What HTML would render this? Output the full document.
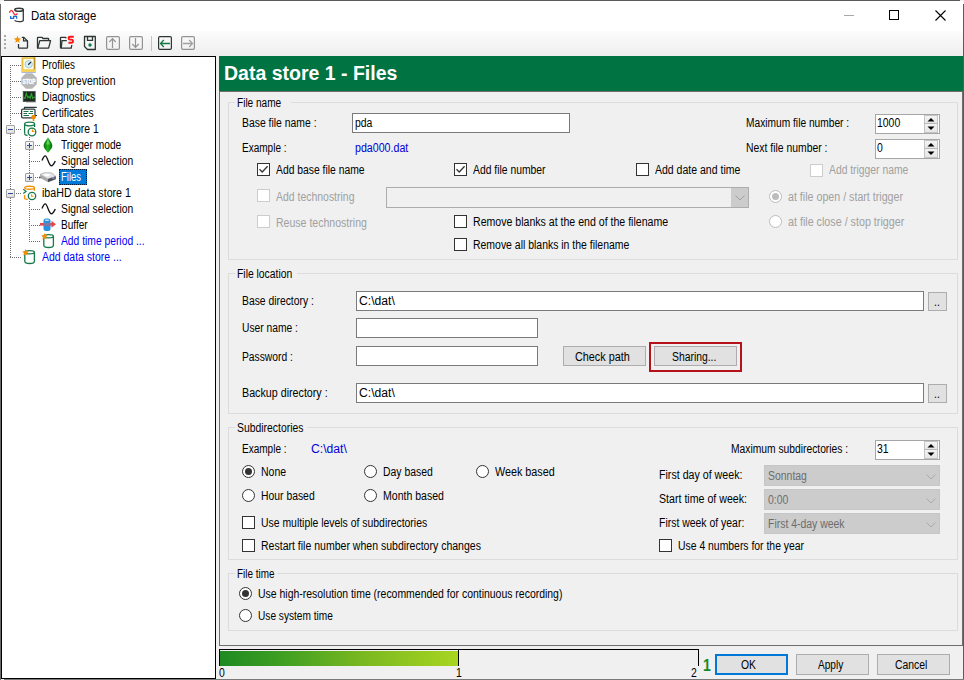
<!DOCTYPE html><html><head><meta charset="utf-8"><style>
*{margin:0;padding:0;box-sizing:border-box}
html,body{width:964px;height:680px;overflow:hidden;background:#f0f0f0;font-family:"Liberation Sans",sans-serif;color:#000}
.a{position:absolute}
.t{position:absolute;font-size:12px;line-height:14px;white-space:nowrap;transform-origin:0 0;transform:scaleX(.87)}
.gb{position:absolute;border:1px solid #dcdcdc}
.tb{position:absolute;background:#fff;border:1px solid #7a7a7a}
.cb{position:absolute;width:13px;height:13px;border:1px solid #333;background:#fff}
.cbd{position:absolute;width:13px;height:13px;border:1px solid #cccccc;background:#fff}
.rb{position:absolute;width:13px;height:13px;border:1px solid #333;border-radius:50%;background:#fff}
.rbd{position:absolute;width:13px;height:13px;border:1px solid #bcbcbc;border-radius:50%;background:#fff}
.btn{position:absolute;background:#e1e1e1;border:1px solid #adadad}
.dis{color:#a0a0a0}
.lnk{color:#1a1ae6}
svg{position:absolute;overflow:visible}
</style></head><body>
<div class="a" style="left:4px;top:0px;width:956px;height:1px;background:#5a5a5a"></div>
<div class="a" style="left:0px;top:4px;width:1px;height:676px;background:#6a6a6a"></div>
<div class="a" style="left:963px;top:4px;width:1px;height:676px;background:#5a5a5a"></div>
<div class="a" style="left:4px;top:679px;width:960px;height:1px;background:#7a7a7a"></div>
<div class="a" style="left:1px;top:1px;width:962px;height:30px;background:#fff"></div>
<div class="t" style="left:31px;top:9px;transform:scaleX(0.95);">Data storage</div>
<div class="a" style="left:844px;top:15px;width:10px;height:1px;background:#a8a8a8"></div>
<div class="a" style="left:889px;top:10px;width:10px;height:10px;border:1px solid #000"></div>
<svg style="left:935px;top:10px" width="11" height="11"><path d="M0.5 0.5L10.5 10.5M10.5 0.5L0.5 10.5" stroke="#000" stroke-width="1.1"/></svg>
<div class="a" style="left:1px;top:31px;width:962px;height:25px;background:linear-gradient(#fcfcfc,#eeeeee)"></div>
<svg style="left:8px;top:7px" width="18" height="17" viewBox="0 0 18 17"><ellipse cx="11" cy="2.8" rx="4.2" ry="1.5" fill="#fff" stroke="#343a3a" stroke-width="1.6"/><path d="M15.3 2.5V13.2Q15.3 14.6 11 14.6Q7.6 14.6 6.6 13.4" fill="none" stroke="#343a3a" stroke-width="1.3"/><path d="M1.3 5.6C2 4.2 2.8 3.3 3.5 3.3C5 3.3 5.8 7.9 7.1 7.9C8 7.9 8.7 7.2 9.5 6.5" fill="none" stroke="#ff2a2a" stroke-width="1.3"/><path d="M2.6 9V11.3H5.6V9.3H8.6V11.8" fill="none" stroke="#1a6fd6" stroke-width="1.3"/></svg>
<div class="a" style="left:4px;top:35px;width:2px;height:2px;background:#a8a8a8"></div>
<div class="a" style="left:4px;top:39px;width:2px;height:2px;background:#a8a8a8"></div>
<div class="a" style="left:4px;top:43px;width:2px;height:2px;background:#a8a8a8"></div>
<div class="a" style="left:4px;top:47px;width:2px;height:2px;background:#a8a8a8"></div>
<svg style="left:13px;top:35px" width="17" height="16" viewBox="0 0 17 16"><path d="M5.5 9V12.5Q5.5 13.2 6.2 13.2H13.8Q14.5 13.2 14.5 12.5V6L10.8 2.3H8.8" fill="none" stroke="#2d3535" stroke-width="1.3"/><path d="M10.5 2.3V5.8H14.5" fill="none" stroke="#2d3535" stroke-width="1.2"/><path d="M4.5 0.8L5.5 3.3L8.2 3.5L6.1 5.2L6.8 7.8L4.5 6.4L2.2 7.8L2.9 5.2L0.8 3.5L3.5 3.3Z" fill="#f39000"/></svg>
<svg style="left:36px;top:36px" width="16" height="14" viewBox="0 0 16 14"><path d="M1.5 12.2V2Q1.5 1.3 2.2 1.3H6L7 2.5H12.2Q12.6 2.5 12.6 3V4.3" fill="none" stroke="#2d3535" stroke-width="1.3"/><path d="M1.7 12.2L3.8 4.6H14.6L12.6 12.2Z" fill="none" stroke="#2d3535" stroke-width="1.3" stroke-linejoin="round"/></svg>
<svg style="left:59px;top:35px" width="17" height="15" viewBox="0 0 17 15"><path d="M1.5 13.2V3Q1.5 2.3 2.2 2.3H6.5L7.3 3.2" fill="none" stroke="#2d3535" stroke-width="1.3"/><path d="M2.2 13.2L3 5.6H7.8" fill="none" stroke="#2d3535" stroke-width="1.3"/><path d="M1.5 13.2H12.2L12.8 10" fill="none" stroke="#2d3535" stroke-width="1.3"/><path d="M14.8 1.8H11.2Q9.6 1.8 9.6 3.3Q9.6 4.6 11.2 4.6H12.4Q14 4.6 14 6.3Q14 7.8 12.4 7.8H9.4" fill="none" stroke="#ff1414" stroke-width="1.9"/></svg>
<svg style="left:83px;top:35px" width="14" height="16" viewBox="0 0 14 16"><path d="M1.5 1.5H12.3V14.5H4.5L1.5 11.5Z" fill="none" stroke="#2d3535" stroke-width="1.3" stroke-linejoin="round"/><path d="M4.5 1.5V5.3H9.5V1.5" fill="none" stroke="#2d3535" stroke-width="1.3"/><circle cx="7" cy="10" r="1.7" fill="#137a48"/></svg>
<svg style="left:105px;top:35px" width="16" height="16" viewBox="0 0 16 16"><rect x="1.6" y="1.6" width="12.8" height="12.8" rx="1.3" fill="none" stroke="#939393" stroke-width="1.2"/><path d="M7.5 13V3.5M4.3 7L7.5 3.6L10.7 7" fill="none" stroke="#939393" stroke-width="1.2"/></svg>
<svg style="left:128px;top:35px" width="16" height="16" viewBox="0 0 16 16"><rect x="1.6" y="1.6" width="12.8" height="12.8" rx="1.3" fill="none" stroke="#939393" stroke-width="1.2"/><path d="M7.5 3V12.5M4.3 9L7.5 12.4L10.7 9" fill="none" stroke="#939393" stroke-width="1.2"/></svg>
<div class="a" style="left:151px;top:36px;width:1px;height:15px;background:#c4c4c4"></div>
<svg style="left:157px;top:35px" width="16" height="16" viewBox="0 0 16 16"><rect x="1.6" y="1.6" width="12.8" height="12.8" rx="1.3" fill="none" stroke="#2d3535" stroke-width="1.2"/><path d="M3.5 8.5H13M6.8 5L3.5 8.5L6.8 12" fill="none" stroke="#137a48" stroke-width="1.3"/></svg>
<svg style="left:180px;top:35px" width="16" height="16" viewBox="0 0 16 16"><rect x="1.6" y="1.6" width="12.8" height="12.8" rx="1.3" fill="none" stroke="#939393" stroke-width="1.2"/><path d="M3 8.5H12.5M9.2 5L12.5 8.5L9.2 12" fill="none" stroke="#a0a0a0" stroke-width="1.3"/></svg>
<div class="a" style="left:1px;top:56px;width:215px;height:623px;border:1px solid #000;background:#fff"></div>
<div class="a" style="left:10px;top:65px;width:1px;height:60px;background:repeating-linear-gradient(to bottom,#6b6b6b 0 1px,transparent 1px 2px)"></div>
<div class="a" style="left:10px;top:134px;width:1px;height:55px;background:repeating-linear-gradient(to bottom,#6b6b6b 0 1px,transparent 1px 2px)"></div>
<div class="a" style="left:10px;top:198px;width:1px;height:60px;background:repeating-linear-gradient(to bottom,#6b6b6b 0 1px,transparent 1px 2px)"></div>
<div class="a" style="left:10px;top:65px;width:11px;height:1px;background:repeating-linear-gradient(to right,#6b6b6b 0 1px,transparent 1px 2px)"></div>
<div class="a" style="left:10px;top:81px;width:11px;height:1px;background:repeating-linear-gradient(to right,#6b6b6b 0 1px,transparent 1px 2px)"></div>
<div class="a" style="left:10px;top:97px;width:11px;height:1px;background:repeating-linear-gradient(to right,#6b6b6b 0 1px,transparent 1px 2px)"></div>
<div class="a" style="left:10px;top:113px;width:11px;height:1px;background:repeating-linear-gradient(to right,#6b6b6b 0 1px,transparent 1px 2px)"></div>
<div class="a" style="left:10px;top:257px;width:11px;height:1px;background:repeating-linear-gradient(to right,#6b6b6b 0 1px,transparent 1px 2px)"></div>
<div class="a" style="left:6px;top:125px;width:9px;height:9px;border:1px solid #a0a0a0;background:linear-gradient(#fafafa,#dcdcdc);border-radius:1px"></div>
<div class="a" style="left:8px;top:129px;width:5px;height:1px;background:#2a4b9b"></div>
<div class="a" style="left:16px;top:129px;width:5px;height:1px;background:repeating-linear-gradient(to right,#6b6b6b 0 1px,transparent 1px 2px)"></div>
<div class="a" style="left:6px;top:189px;width:9px;height:9px;border:1px solid #a0a0a0;background:linear-gradient(#fafafa,#dcdcdc);border-radius:1px"></div>
<div class="a" style="left:8px;top:193px;width:5px;height:1px;background:#2a4b9b"></div>
<div class="a" style="left:16px;top:193px;width:5px;height:1px;background:repeating-linear-gradient(to right,#6b6b6b 0 1px,transparent 1px 2px)"></div>
<div class="a" style="left:29px;top:137px;width:1px;height:4px;background:repeating-linear-gradient(to bottom,#6b6b6b 0 1px,transparent 1px 2px)"></div>
<div class="a" style="left:29px;top:150px;width:1px;height:23px;background:repeating-linear-gradient(to bottom,#6b6b6b 0 1px,transparent 1px 2px)"></div>
<div class="a" style="left:29px;top:201px;width:1px;height:41px;background:repeating-linear-gradient(to bottom,#6b6b6b 0 1px,transparent 1px 2px)"></div>
<div class="a" style="left:25px;top:141px;width:9px;height:9px;border:1px solid #a0a0a0;background:linear-gradient(#fafafa,#dcdcdc);border-radius:1px"></div>
<div class="a" style="left:27px;top:145px;width:5px;height:1px;background:#2a4b9b"></div>
<div class="a" style="left:29px;top:143px;width:1px;height:5px;background:#2a4b9b"></div>
<div class="a" style="left:35px;top:145px;width:5px;height:1px;background:repeating-linear-gradient(to right,#6b6b6b 0 1px,transparent 1px 2px)"></div>
<div class="a" style="left:29px;top:161px;width:11px;height:1px;background:repeating-linear-gradient(to right,#6b6b6b 0 1px,transparent 1px 2px)"></div>
<div class="a" style="left:25px;top:173px;width:9px;height:9px;border:1px solid #a0a0a0;background:linear-gradient(#fafafa,#dcdcdc);border-radius:1px"></div>
<div class="a" style="left:27px;top:177px;width:5px;height:1px;background:#2a4b9b"></div>
<div class="a" style="left:29px;top:175px;width:1px;height:5px;background:#2a4b9b"></div>
<div class="a" style="left:35px;top:177px;width:5px;height:1px;background:repeating-linear-gradient(to right,#6b6b6b 0 1px,transparent 1px 2px)"></div>
<div class="a" style="left:29px;top:209px;width:11px;height:1px;background:repeating-linear-gradient(to right,#6b6b6b 0 1px,transparent 1px 2px)"></div>
<div class="a" style="left:29px;top:225px;width:11px;height:1px;background:repeating-linear-gradient(to right,#6b6b6b 0 1px,transparent 1px 2px)"></div>
<div class="a" style="left:29px;top:241px;width:11px;height:1px;background:repeating-linear-gradient(to right,#6b6b6b 0 1px,transparent 1px 2px)"></div>
<svg style="left:21px;top:57px" width="16" height="16" viewBox="0 0 16 16"><rect x="0.5" y="0.3" width="13.8" height="14.7" fill="#e6bd3a"/><rect x="12.6" y="0.3" width="1.7" height="12.5" fill="#b88f1e"/><rect x="2.4" y="1.9" width="10.2" height="10.6" fill="#fffbe2"/><rect x="0.5" y="12.5" width="14.3" height="2.5" fill="#f2d25a"/><rect x="0.5" y="15" width="14.3" height="0.8" fill="#9aa6c8"/><circle cx="7.7" cy="7.2" r="3.7" fill="#d2f0fb" stroke="#98b4c8" stroke-width="0.7"/><path d="M7.2 7.8L9.9 5.1" stroke="#1e2a38" stroke-width="1.3"/></svg>
<svg style="left:21px;top:73px" width="16" height="16" viewBox="0 0 16 16"><path d="M4.8 0.3H11.2L15.8 4.8V11.2L11.2 15.8H4.8L0.3 11.2V4.8Z" fill="#b7b7b7"/><text x="8" y="10.6" font-size="6.3" font-weight="bold" fill="#fff" stroke="#fff" stroke-width="0.35" text-anchor="middle" font-family="Liberation Sans" textLength="13" lengthAdjust="spacingAndGlyphs">STOP</text></svg>
<svg style="left:22px;top:90px" width="15" height="14" viewBox="0 0 15 14"><rect x="1.2" y="1.4" width="12" height="10.2" fill="#1e2820" stroke="#505850" stroke-width="0.8"/><path d="M1.6 7.4L3 8.5L4.3 3.3L5.8 7.6L7 6.4L8.1 8.2L9.5 3.2L10.5 8.4L11.6 7.3H12.8" fill="none" stroke="#27a52c" stroke-width="1.2"/><rect x="4" y="12" width="10" height="1" fill="#cfcfcf"/></svg>
<svg style="left:21px;top:106px" width="17" height="16" viewBox="0 0 17 16"><path d="M3.5 3V1.3H15.8" fill="none" stroke="#2d3a3a" stroke-width="1.2"/><path d="M14 9.5H16" stroke="#2d3a3a" stroke-width="1.2"/><rect x="0.6" y="3.2" width="13.4" height="8.6" rx="1" fill="#fff" stroke="#2d3a3a" stroke-width="1.2"/><path d="M2.5 5.5H7.5M9 5.5H12M2.5 7.5H6M7.5 7.5H12M2.5 9.5H8" stroke="#137a48" stroke-width="1.1"/><circle cx="12.5" cy="11" r="2.2" fill="#f08c00"/><path d="M12.5 12.5V15" stroke="#f08c00" stroke-width="1.6"/></svg>
<svg style="left:22px;top:121px" width="16" height="16" viewBox="0 0 16 16"><path d="M2.6 12.5V3.2M12.6 3.2V6" fill="none" stroke="#137a48" stroke-width="1.3"/><ellipse cx="7.6" cy="3" rx="5" ry="1.8" fill="none" stroke="#137a48" stroke-width="1.3"/><path d="M2.6 12.5Q2.6 14.2 5.5 14.5" fill="none" stroke="#137a48" stroke-width="1.3"/><circle cx="10" cy="11" r="3.8" fill="#fff" stroke="#137a48" stroke-width="1.3"/><path d="M10.5 8.5V10.5H12.5" fill="none" stroke="#f39200" stroke-width="1.2"/></svg>
<svg style="left:43px;top:137px" width="10" height="16" viewBox="0 0 10 16"><defs><linearGradient id="gg" x1="0" x2="1"><stop offset="0" stop-color="#0a6a0a"/><stop offset="0.45" stop-color="#22b422"/><stop offset="1" stop-color="#087008"/></linearGradient></defs><path d="M5 0.2C6 2.5 9.4 5.5 9.4 8.8C9.4 11.5 6.5 13.8 5 15.8C3.5 13.8 0.6 11.5 0.6 8.8C0.6 5.5 4 2.5 5 0.2Z" fill="url(#gg)"/><path d="M5 1.5L6.8 7.5H3.2Z" fill="#7ee07e" opacity="0.7"/></svg>
<svg style="left:41px;top:155px" width="16" height="13" viewBox="0 0 16 13"><path d="M1 5.5C2 3 3 0.8 4.3 0.8C6.5 0.8 7.5 10.8 10.5 10.8C12 10.8 13.3 8 14.3 6" fill="none" stroke="#111" stroke-width="1.3"/></svg>
<svg style="left:38px;top:168px" width="20" height="18" viewBox="0 0 20 18"><path d="M2 6.5L6 4.8H13.5L17.8 8.3L10 11Z" fill="#e4e4e4" stroke="#9a9a9a" stroke-width="0.6"/><ellipse cx="9" cy="7" rx="3" ry="1.2" fill="#fff"/><path d="M2 6.5L10 11V14.2L2.3 10Z" fill="#a8a8a8"/><path d="M10 11L17.8 8.3V11.3L10 14.2Z" fill="#4e4e56"/><rect x="14.3" y="9.2" width="2" height="1.5" fill="#9aa0e8"/><circle cx="1.8" cy="9.5" r="0.9" fill="#555"/></svg>
<svg style="left:22px;top:185px" width="16" height="16" viewBox="0 0 16 16"><ellipse cx="7.5" cy="2.75" rx="4.9" ry="1.5" fill="none" stroke="#f39200" stroke-width="1.3"/><path d="M12.4 3V5.7M2.6 9.9V13.3Q2.6 14.3 5.7 14.4" fill="none" stroke="#f39200" stroke-width="1.3"/><path d="M1.3 4.3L4 6.4L1.3 8.4" fill="none" stroke="#137a48" stroke-width="1.2"/><circle cx="10" cy="11" r="3.7" fill="#fff" stroke="#137a48" stroke-width="1.3"/><path d="M9.6 9.2V11.3H11.6" fill="none" stroke="#f39200" stroke-width="1.1"/></svg>
<svg style="left:41px;top:203px" width="16" height="13" viewBox="0 0 16 13"><path d="M1 5.5C2 3 3 0.8 4.3 0.8C6.5 0.8 7.5 10.8 10.5 10.8C12 10.8 13.3 8 14.3 6" fill="none" stroke="#111" stroke-width="1.3"/></svg>
<svg style="left:40px;top:218px" width="17" height="14" viewBox="0 0 17 14"><rect x="3.5" y="0.5" width="7" height="12.5" rx="2.5" fill="#2a8fe0"/><rect x="5" y="1.5" width="4" height="1.5" rx="0.7" fill="#bfe0fa"/><path d="M0 6.3H12" stroke="#e8454f" stroke-width="2.6"/><path d="M11.5 2.8L16 6.3L11.5 9.8Z" fill="#e8454f"/><path d="M3.5 5H10.5V7.6H3.5Z" fill="#7a7aa8"/></svg>
<svg style="left:41px;top:233px" width="16" height="16" viewBox="0 0 16 16"><ellipse cx="7.6" cy="3.2" rx="4.8" ry="1.6" fill="#fff" stroke="#137a48" stroke-width="1.3"/><path d="M2.8 3.5V12.3Q2.8 14.5 7.6 14.5Q12.4 14.5 12.4 12.3V3.2" fill="none" stroke="#137a48" stroke-width="1.3"/><path d="M3.5 0L4.5 2.2L6.9 2.4L5.1 4L5.6 6.4L3.5 5.2L1.4 6.4L1.9 4L0.1 2.4L2.5 2.2Z" fill="#f08c00"/></svg>
<svg style="left:22px;top:249px" width="16" height="16" viewBox="0 0 16 16"><ellipse cx="7.6" cy="3.2" rx="4.8" ry="1.6" fill="#fff" stroke="#137a48" stroke-width="1.3"/><path d="M2.8 3.5V12.3Q2.8 14.5 7.6 14.5Q12.4 14.5 12.4 12.3V3.2" fill="none" stroke="#137a48" stroke-width="1.3"/><path d="M3.5 0L4.5 2.2L6.9 2.4L5.1 4L5.6 6.4L3.5 5.2L1.4 6.4L1.9 4L0.1 2.4L2.5 2.2Z" fill="#f08c00"/></svg>
<div class="t" style="left:42px;top:58px;transform:scaleX(0.82);"><span style="color:#000">Profiles</span></div>
<div class="t" style="left:42px;top:74px;transform:scaleX(0.874);"><span style="color:#000">Stop prevention</span></div>
<div class="t" style="left:42px;top:90px;transform:scaleX(0.855);"><span style="color:#000">Diagnostics</span></div>
<div class="t" style="left:42px;top:106px;transform:scaleX(0.86);"><span style="color:#000">Certificates</span></div>
<div class="t" style="left:42px;top:122px;transform:scaleX(0.869);"><span style="color:#000">Data store 1</span></div>
<div class="t" style="left:61px;top:138px;transform:scaleX(0.85);"><span style="color:#000">Trigger mode</span></div>
<div class="t" style="left:61px;top:154px;transform:scaleX(0.859);"><span style="color:#000">Signal selection</span></div>
<div class="a" style="left:59px;top:169px;width:28px;height:16px;background:#0078d7;outline:1px dotted #001a40;outline-offset:-1px"></div>
<div class="t" style="left:61px;top:170px;transform:scaleX(0.791);"><span style="color:#fff">Files</span></div>
<div class="t" style="left:42px;top:186px;transform:scaleX(0.889);"><span style="color:#000">ibaHD data store 1</span></div>
<div class="t" style="left:61px;top:202px;transform:scaleX(0.859);"><span style="color:#000">Signal selection</span></div>
<div class="t" style="left:61px;top:218px;transform:scaleX(0.84);"><span style="color:#000">Buffer</span></div>
<div class="t" style="left:61px;top:234px;transform:scaleX(0.858);"><span style="color:#0000ff">Add time period ...</span></div>
<div class="t" style="left:42px;top:250px;transform:scaleX(0.872);"><span style="color:#0000ff">Add data store ...</span></div>
<div class="a" style="left:219px;top:56px;width:744px;height:35px;background:#007343"></div>
<div class="a" style="left:224px;top:61px;font-size:19.5px;line-height:24px;font-weight:bold;color:#fff;white-space:nowrap">Data store 1 - Files</div>
<div class="a" style="left:219px;top:91px;width:744px;height:555px;border:1px solid #6e6e6e"></div>
<div class="a" style="left:228px;top:102px;width:730px;height:158px;border:1px solid #dcdcdc"></div>
<div class="a" style="left:235px;top:96px;width:56px;height:12px;background:#f0f0f0"></div>
<div class="t" style="left:237px;top:96px;transform:scaleX(0.839);">File name</div>
<div class="a" style="left:228px;top:273px;width:730px;height:141px;border:1px solid #dcdcdc"></div>
<div class="a" style="left:235px;top:267px;width:62px;height:12px;background:#f0f0f0"></div>
<div class="t" style="left:237px;top:267px;transform:scaleX(0.863);">File location</div>
<div class="a" style="left:228px;top:427px;width:730px;height:133px;border:1px solid #dcdcdc"></div>
<div class="a" style="left:235px;top:421px;width:72px;height:12px;background:#f0f0f0"></div>
<div class="t" style="left:237px;top:421px;transform:scaleX(0.866);">Subdirectories</div>
<div class="a" style="left:228px;top:573px;width:730px;height:58px;border:1px solid #dcdcdc"></div>
<div class="a" style="left:235px;top:567px;width:42px;height:12px;background:#f0f0f0"></div>
<div class="t" style="left:237px;top:567px;transform:scaleX(0.826);">File time</div>
<div class="t" style="left:242px;top:116px;transform:scaleX(0.866);">Base file name :</div>
<div class="a" style="left:352px;top:113px;width:218px;height:20px;border:1px solid #7a7a7a;background:#fff;"></div>
<div class="t" style="left:355px;top:116px;">pda</div>
<div class="t" style="left:242px;top:141px;transform:scaleX(0.835);">Example :</div>
<div class="t" style="left:355px;top:141px;transform:scaleX(0.887);"><span style="color:#0000d8">pda000.dat</span></div>
<div class="t" style="left:746px;top:116px;transform:scaleX(0.85);">Maximum file number :</div>
<div class="a" style="left:875px;top:114px;width:65px;height:20px;border:1px solid #a6a6a6;background:#fff"></div>
<div class="t" style="left:877px;top:116px;">1000</div>
<div class="a" style="left:924px;top:115px;width:14px;height:9px;border:1px solid #c4c4c4;border-bottom:none;background:linear-gradient(#f4f4f4,#e6e6e6)"></div>
<div class="a" style="left:924px;top:123px;width:14px;height:1px;background:#b8b8b8"></div>
<div class="a" style="left:924px;top:124px;width:14px;height:9px;border:1px solid #c4c4c4;border-top:none;background:linear-gradient(#f4f4f4,#e6e6e6)"></div>
<svg style="left:924px;top:115px" width="14" height="18"><path d="M3.5 6.5L7 3L10.5 6.5Z" fill="#000"/><path d="M3.5 11.5L7 15L10.5 11.5Z" fill="#000"/></svg>
<div class="t" style="left:746px;top:141px;transform:scaleX(0.866);">Next file number :</div>
<div class="a" style="left:875px;top:139px;width:65px;height:20px;border:1px solid #a6a6a6;background:#fff"></div>
<div class="t" style="left:877px;top:141px;">0</div>
<div class="a" style="left:924px;top:140px;width:14px;height:9px;border:1px solid #c4c4c4;border-bottom:none;background:linear-gradient(#f4f4f4,#e6e6e6)"></div>
<div class="a" style="left:924px;top:148px;width:14px;height:1px;background:#b8b8b8"></div>
<div class="a" style="left:924px;top:149px;width:14px;height:9px;border:1px solid #c4c4c4;border-top:none;background:linear-gradient(#f4f4f4,#e6e6e6)"></div>
<svg style="left:924px;top:140px" width="14" height="18"><path d="M3.5 6.5L7 3L10.5 6.5Z" fill="#000"/><path d="M3.5 11.5L7 15L10.5 11.5Z" fill="#000"/></svg>
<div class="a" style="left:257px;top:163px;width:13px;height:13px;border:1px solid #333;background:#fff"></div>
<svg style="left:257px;top:163px" width="13" height="13"><path d="M2.5 6.3L5.2 9L10.6 3.3" fill="none" stroke="#333" stroke-width="1.3"/></svg>
<div class="t" style="left:276px;top:163px;transform:scaleX(0.862);">Add base file name</div>
<div class="a" style="left:454px;top:163px;width:13px;height:13px;border:1px solid #333;background:#fff"></div>
<svg style="left:454px;top:163px" width="13" height="13"><path d="M2.5 6.3L5.2 9L10.6 3.3" fill="none" stroke="#333" stroke-width="1.3"/></svg>
<div class="t" style="left:473px;top:163px;transform:scaleX(0.862);">Add file number</div>
<div class="a" style="left:636px;top:163px;width:13px;height:13px;border:1px solid #333;background:#fff"></div>
<div class="t" style="left:655px;top:163px;transform:scaleX(0.876);">Add date and time</div>
<div class="a" style="left:810px;top:164px;width:13px;height:13px;border:1px solid #cccccc;background:#fff"></div>
<div class="t" style="left:829px;top:163px;transform:scaleX(0.861);"><span class="dis">Add trigger name</span></div>
<div class="a" style="left:257px;top:189px;width:13px;height:13px;border:1px solid #cccccc;background:#fff"></div>
<div class="t" style="left:276px;top:190px;transform:scaleX(0.871);"><span class="dis">Add technostring</span></div>
<div class="a" style="left:386px;top:187px;width:363px;height:21px;border:1px solid #adadad;background:#f0f0f0"></div>
<div class="a" style="left:731px;top:188px;width:17px;height:19px;background:#cccccc"></div>
<svg style="left:735px;top:195px" width="11" height="6"><path d="M0.5 0.5L5 5L9.5 0.5" fill="none" stroke="#a0a0a0" stroke-width="1"/></svg>
<svg style="left:769px;top:190px" width="13" height="13"><circle cx="6.5" cy="6.5" r="6" fill="#fff" stroke="#bcbcbc" stroke-width="1"/><circle cx="6.5" cy="6.5" r="3.5" fill="#bcbcbc"/></svg>
<div class="t" style="left:788px;top:190px;transform:scaleX(0.889);"><span class="dis">at file open / start trigger</span></div>
<div class="a" style="left:257px;top:215px;width:13px;height:13px;border:1px solid #cccccc;background:#fff"></div>
<div class="t" style="left:276px;top:216px;transform:scaleX(0.879);"><span class="dis">Reuse technostring</span></div>
<div class="a" style="left:454px;top:215px;width:13px;height:13px;border:1px solid #333;background:#fff"></div>
<div class="t" style="left:473px;top:215px;transform:scaleX(0.881);">Remove blanks at the end of the filename</div>
<svg style="left:769px;top:215px" width="13" height="13"><circle cx="6.5" cy="6.5" r="6" fill="#fff" stroke="#bcbcbc" stroke-width="1"/></svg>
<div class="t" style="left:788px;top:215px;transform:scaleX(0.894);"><span class="dis">at file close / stop trigger</span></div>
<div class="a" style="left:454px;top:238px;width:13px;height:13px;border:1px solid #333;background:#fff"></div>
<div class="t" style="left:473px;top:238px;transform:scaleX(0.871);">Remove all blanks in the filename</div>
<div class="t" style="left:242px;top:294px;transform:scaleX(0.862);">Base directory :</div>
<div class="a" style="left:356px;top:291px;width:568px;height:20px;border:1px solid #7a7a7a;background:#fff;"></div>
<div class="t" style="left:359px;top:294px;transform:scaleX(1.014);">C:\dat\</div>
<div class="a" style="left:928px;top:292px;width:19px;height:19px;border:1px solid #adadad;background:#e1e1e1;"></div>
<div class="t" style="left:934px;top:295px;">..</div>
<div class="t" style="left:242px;top:321px;transform:scaleX(0.855);">User name :</div>
<div class="a" style="left:356px;top:318px;width:182px;height:20px;border:1px solid #7a7a7a;background:#fff;"></div>
<div class="t" style="left:242px;top:350px;transform:scaleX(0.857);">Password :</div>
<div class="a" style="left:356px;top:346px;width:182px;height:20px;border:1px solid #7a7a7a;background:#fff;"></div>
<div class="a" style="left:563px;top:346px;width:83px;height:20px;border:1px solid #adadad;background:#e1e1e1;"></div>
<div class="t" style="left:575px;top:350px;transform:scaleX(0.901);">Check path</div>
<div class="a" style="left:649px;top:342px;width:93px;height:30px;border:2px solid #b5121b"></div>
<div class="a" style="left:654px;top:346px;width:83px;height:20px;border:1px solid #adadad;background:#e1e1e1;"></div>
<div class="t" style="left:672px;top:350px;transform:scaleX(0.864);">Sharing...</div>
<div class="t" style="left:242px;top:386px;transform:scaleX(0.892);">Backup directory :</div>
<div class="a" style="left:356px;top:383px;width:568px;height:20px;border:1px solid #7a7a7a;background:#fff;"></div>
<div class="t" style="left:359px;top:386px;transform:scaleX(1.014);">C:\dat\</div>
<div class="a" style="left:928px;top:384px;width:19px;height:19px;border:1px solid #adadad;background:#e1e1e1;"></div>
<div class="t" style="left:934px;top:387px;">..</div>
<div class="t" style="left:242px;top:442px;transform:scaleX(0.835);">Example :</div>
<div class="t" style="left:311px;top:442px;transform:scaleX(1.014);"><span style="color:#0000d8">C:\dat\</span></div>
<svg style="left:242px;top:465px" width="13" height="13"><circle cx="6.5" cy="6.5" r="6" fill="#fff" stroke="#333" stroke-width="1"/><circle cx="6.5" cy="6.5" r="3.5" fill="#333"/></svg>
<div class="t" style="left:261px;top:465px;transform:scaleX(0.875);">None</div>
<svg style="left:364px;top:465px" width="13" height="13"><circle cx="6.5" cy="6.5" r="6" fill="#fff" stroke="#333" stroke-width="1"/></svg>
<div class="t" style="left:383px;top:465px;transform:scaleX(0.868);">Day based</div>
<svg style="left:476px;top:465px" width="13" height="13"><circle cx="6.5" cy="6.5" r="6" fill="#fff" stroke="#333" stroke-width="1"/></svg>
<div class="t" style="left:495px;top:465px;transform:scaleX(0.898);">Week based</div>
<svg style="left:242px;top:489px" width="13" height="13"><circle cx="6.5" cy="6.5" r="6" fill="#fff" stroke="#333" stroke-width="1"/></svg>
<div class="t" style="left:261px;top:489px;transform:scaleX(0.865);">Hour based</div>
<svg style="left:364px;top:489px" width="13" height="13"><circle cx="6.5" cy="6.5" r="6" fill="#fff" stroke="#333" stroke-width="1"/></svg>
<div class="t" style="left:383px;top:489px;transform:scaleX(0.878);">Month based</div>
<div class="a" style="left:242px;top:516px;width:13px;height:13px;border:1px solid #333;background:#fff"></div>
<div class="t" style="left:261px;top:516px;transform:scaleX(0.868);">Use multiple levels of subdirectories</div>
<div class="a" style="left:242px;top:539px;width:13px;height:13px;border:1px solid #333;background:#fff"></div>
<div class="t" style="left:261px;top:539px;transform:scaleX(0.877);">Restart file number when subdirectory changes</div>
<div class="t" style="left:731px;top:442px;transform:scaleX(0.857);">Maximum subdirectories :</div>
<div class="a" style="left:875px;top:440px;width:65px;height:20px;border:1px solid #a6a6a6;background:#fff"></div>
<div class="t" style="left:877px;top:442px;">31</div>
<div class="a" style="left:924px;top:441px;width:14px;height:9px;border:1px solid #c4c4c4;border-bottom:none;background:linear-gradient(#f4f4f4,#e6e6e6)"></div>
<div class="a" style="left:924px;top:449px;width:14px;height:1px;background:#b8b8b8"></div>
<div class="a" style="left:924px;top:450px;width:14px;height:9px;border:1px solid #c4c4c4;border-top:none;background:linear-gradient(#f4f4f4,#e6e6e6)"></div>
<svg style="left:924px;top:441px" width="14" height="18"><path d="M3.5 6.5L7 3L10.5 6.5Z" fill="#000"/><path d="M3.5 11.5L7 15L10.5 11.5Z" fill="#000"/></svg>
<div class="t" style="left:659px;top:468px;transform:scaleX(0.887);">First day of week:</div>
<div class="a" style="left:764px;top:465px;width:176px;height:21px;border:1px solid #c6c6c6;background:#cccccc"></div>
<div class="t" style="left:768px;top:469px;"><span style="color:#6d6d6d">Sonntag</span></div>
<svg style="left:926px;top:474px" width="11" height="6"><path d="M0.5 0.5L5 5L9.5 0.5" fill="none" stroke="#a8a8a8" stroke-width="1"/></svg>
<div class="t" style="left:659px;top:492px;transform:scaleX(0.886);">Start time of week:</div>
<div class="a" style="left:764px;top:489px;width:176px;height:21px;border:1px solid #c6c6c6;background:#cccccc"></div>
<div class="t" style="left:768px;top:493px;"><span style="color:#6d6d6d">0:00</span></div>
<svg style="left:926px;top:498px" width="11" height="6"><path d="M0.5 0.5L5 5L9.5 0.5" fill="none" stroke="#a8a8a8" stroke-width="1"/></svg>
<div class="t" style="left:659px;top:516px;transform:scaleX(0.87);">First week of year:</div>
<div class="a" style="left:764px;top:513px;width:176px;height:21px;border:1px solid #c6c6c6;background:#cccccc"></div>
<div class="t" style="left:768px;top:517px;"><span style="color:#6d6d6d">First 4-day week</span></div>
<svg style="left:926px;top:522px" width="11" height="6"><path d="M0.5 0.5L5 5L9.5 0.5" fill="none" stroke="#a8a8a8" stroke-width="1"/></svg>
<div class="a" style="left:659px;top:539px;width:13px;height:13px;border:1px solid #333;background:#fff"></div>
<div class="t" style="left:678px;top:539px;transform:scaleX(0.867);">Use 4 numbers for the year</div>
<svg style="left:239px;top:587px" width="13" height="13"><circle cx="6.5" cy="6.5" r="6" fill="#fff" stroke="#333" stroke-width="1"/><circle cx="6.5" cy="6.5" r="3.5" fill="#333"/></svg>
<div class="t" style="left:258px;top:587px;transform:scaleX(0.871);">Use high-resolution time (recommended for continuous recording)</div>
<svg style="left:239px;top:609px" width="13" height="13"><circle cx="6.5" cy="6.5" r="6" fill="#fff" stroke="#333" stroke-width="1"/></svg>
<div class="t" style="left:258px;top:609px;transform:scaleX(0.844);">Use system time</div>
<div class="a" style="left:219px;top:649px;width:480px;height:17px;border-top:1px solid #000;border-right:1px solid #000"></div>
<div class="a" style="left:219px;top:649px;width:240px;height:17px;border-top:1px solid #000;border-right:1px solid #000;border-left:1px solid #000"></div>
<div class="a" style="left:220px;top:651px;width:238px;height:15px;background:linear-gradient(90deg,#1e8a22,#3d9e22 25%,#7ab820 60%,#a8d520)"></div>
<div class="t" style="left:219px;top:666px;">0</div>
<div class="t" style="left:456px;top:666px;">1</div>
<div class="t" style="left:691px;top:666px;">2</div>
<div class="a" style="left:703px;top:656px;font-size:16.5px;line-height:18px;font-weight:bold;color:#158a2a;transform:scaleX(.85);transform-origin:0 0">1</div>
<div class="a" style="left:715px;top:654px;width:73px;height:21px;border:2px solid #0078d7;background:#e1e1e1"></div>
<div class="t" style="left:741px;top:658px;transform:scaleX(0.861);">OK</div>
<div class="a" style="left:796px;top:654px;width:73px;height:21px;border:1px solid #adadad;background:#e1e1e1;"></div>
<div class="t" style="left:818px;top:658px;transform:scaleX(0.843);">Apply</div>
<div class="a" style="left:877px;top:654px;width:73px;height:21px;border:1px solid #adadad;background:#e1e1e1;"></div>
<div class="t" style="left:895px;top:658px;transform:scaleX(0.866);">Cancel</div>
</body></html>
